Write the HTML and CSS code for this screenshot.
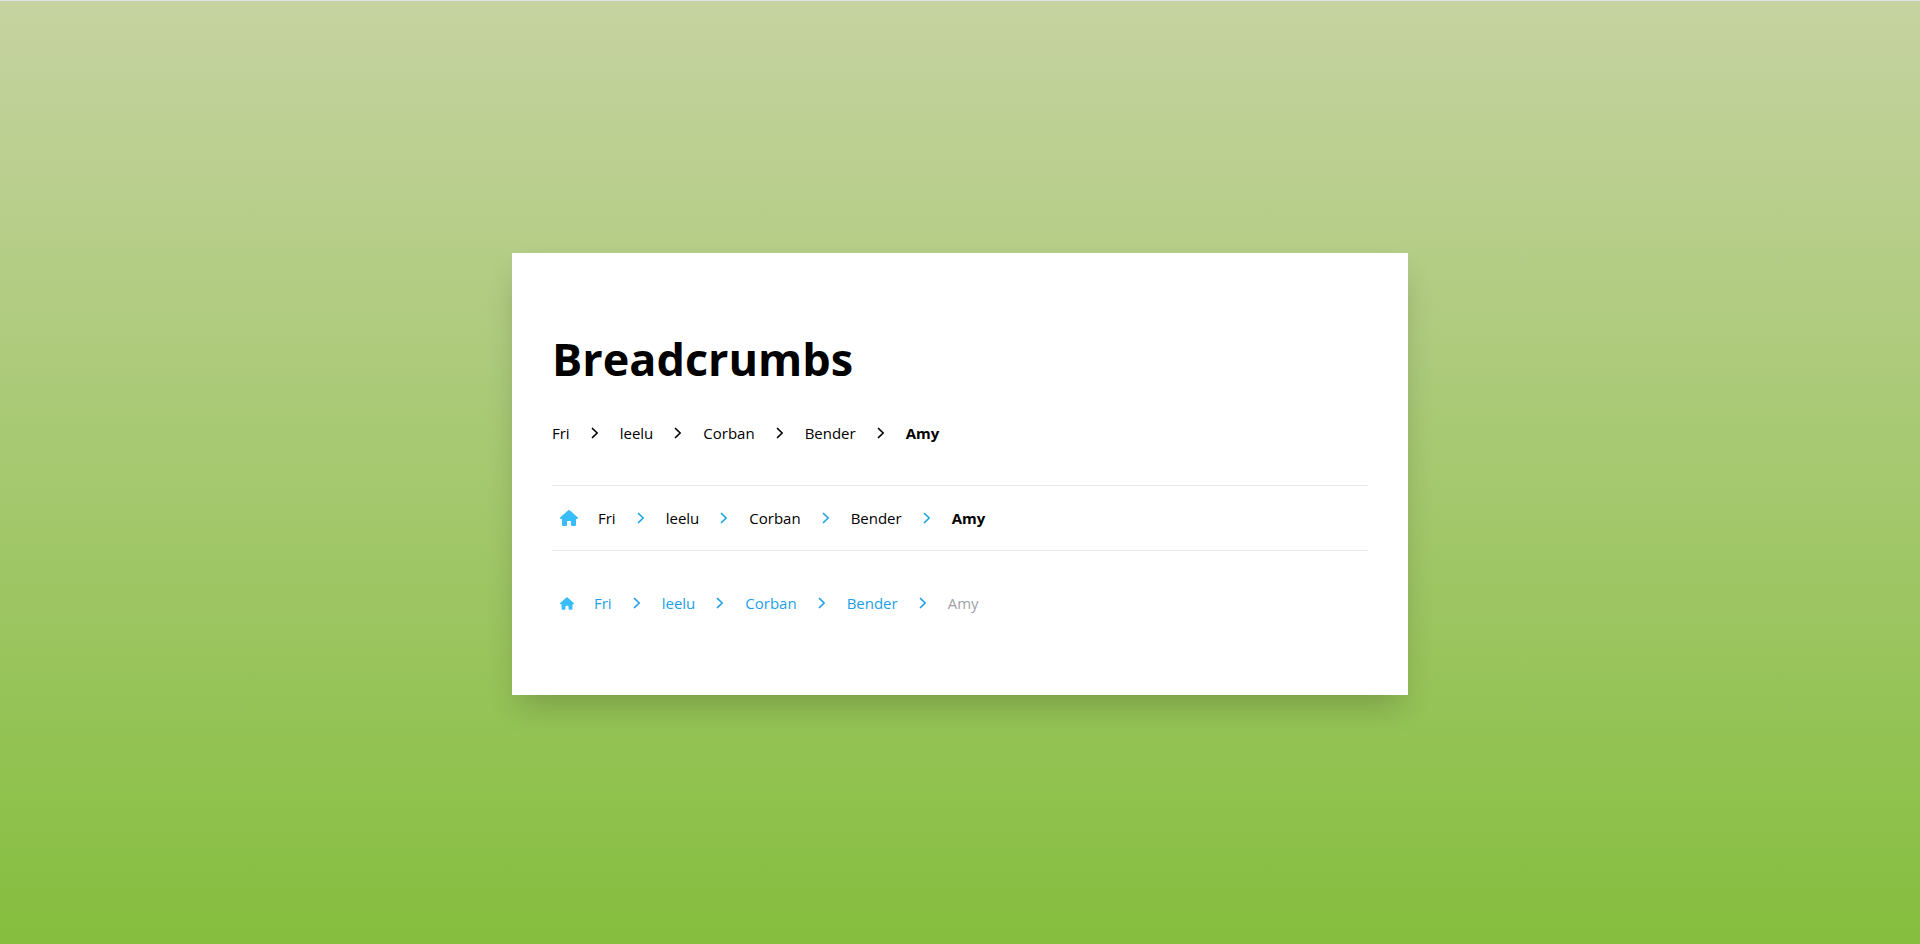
FILE: index.html
```html
<!DOCTYPE html>
<html lang="en">
<head>
<meta charset="utf-8">
<meta name="viewport" content="width=device-width, initial-scale=1">
<title>Breadcrumbs</title>
<link rel="stylesheet" href="styles.css">
</head>
<body>
<svg class="sprite" aria-hidden="true">
  <symbol id="chevron" viewBox="0 0 8 12"><path d="M1.5 1.5 6.2 6 1.5 10.5" fill="none" stroke="currentColor" stroke-width="1.7" stroke-linecap="round" stroke-linejoin="round"/></symbol>
  <symbol id="home" viewBox="0 0 576 512"><path fill="currentColor" d="M575.8 255.5c0 18-15 32.1-32 32.1h-32l.7 160.2c0 2.7-.2 5.4-.5 8.1V472c0 22.1-17.9 40-40 40H456c-1.1 0-2.2 0-3.3-.1c-1.4 .1-2.8 .1-4.2 .1H416 392c-22.1 0-40-17.9-40-40V448 384c0-17.7-14.3-32-32-32H256c-17.7 0-32 14.3-32 32v64 24c0 22.1-17.9 40-40 40H160 128.1c-1.5 0-3-.1-4.5-.2c-1.2 .1-2.4 .2-3.6 .2H104c-22.1 0-40-17.9-40-40V360c0-.9 0-1.9 .1-2.8V287.6H32c-18 0-32-14-32-32.1c0-9 3-17 10-24L266.4 8c7-7 15-8 22-8s15 2 21 7L564.8 231.5c8 7 12 15 11 24z"/></symbol>
</svg>
<main class="card">
  <h1 class="title">Breadcrumbs</h1>

  <nav class="crumbs crumbs-plain" aria-label="Plain breadcrumb">
    <ol class="list">
      <li class="item"><a class="link" href="#">Fri</a><svg class="chevron"><use href="#chevron"/></svg></li>
      <li class="item"><a class="link" href="#">leelu</a><svg class="chevron"><use href="#chevron"/></svg></li>
      <li class="item"><a class="link" href="#">Corban</a><svg class="chevron"><use href="#chevron"/></svg></li>
      <li class="item"><a class="link" href="#">Bender</a><svg class="chevron"><use href="#chevron"/></svg></li>
      <li class="item"><a class="link current" href="#" aria-current="page">Amy</a></li>
    </ol>
  </nav>

  <nav class="crumbs crumbs-ruled" aria-label="Ruled breadcrumb">
    <ol class="list">
      <li class="item"><a class="home" href="#" aria-label="Home"><svg class="home-icon"><use href="#home"/></svg></a></li>
      <li class="item"><a class="link" href="#">Fri</a><svg class="chevron"><use href="#chevron"/></svg></li>
      <li class="item"><a class="link" href="#">leelu</a><svg class="chevron"><use href="#chevron"/></svg></li>
      <li class="item"><a class="link" href="#">Corban</a><svg class="chevron"><use href="#chevron"/></svg></li>
      <li class="item"><a class="link" href="#">Bender</a><svg class="chevron"><use href="#chevron"/></svg></li>
      <li class="item"><a class="link current" href="#" aria-current="page">Amy</a></li>
    </ol>
  </nav>

  <nav class="crumbs crumbs-blue" aria-label="Blue breadcrumb">
    <ol class="list">
      <li class="item"><a class="home" href="#" aria-label="Home"><svg class="home-icon home-icon-small"><use href="#home"/></svg></a></li>
      <li class="item"><a class="link" href="#">Fri</a><svg class="chevron"><use href="#chevron"/></svg></li>
      <li class="item"><a class="link" href="#">leelu</a><svg class="chevron"><use href="#chevron"/></svg></li>
      <li class="item"><a class="link" href="#">Corban</a><svg class="chevron"><use href="#chevron"/></svg></li>
      <li class="item"><a class="link" href="#">Bender</a><svg class="chevron"><use href="#chevron"/></svg></li>
      <li class="item"><a class="link current" href="#" aria-current="page">Amy</a></li>
    </ol>
  </nav>
</main>
</body>
</html>
```
FILE: styles.css
```css
*, *::before, *::after { box-sizing: border-box; }

body {
  margin: 0;
  min-height: 100vh;
  padding-top: 3px;
  display: flex;
  align-items: center;
  justify-content: center;
  border-top: 1px solid #dee1e6;
  background: linear-gradient(#c6d3a1, #85be3e);
  color: #000;
  font: 15px/24px "Segoe UI", "Open Sans", "Noto Sans", sans-serif;
}

.sprite { position: absolute; width: 0; height: 0; }

.card {
  width: 100%;
  max-width: 896px;
  padding: 72px 40px 80px;
  background: #fff;
  box-shadow: 0 16px 30px -6px rgba(0, 0, 0, 0.2);
}

.title {
  margin: 0;
  font-size: 45px;
  line-height: 68px;
  font-weight: 700;
}

.list {
  display: flex;
  flex-wrap: wrap;
  margin: 0;
  padding: 0;
  list-style: none;
}

.item { display: flex; align-items: center; }
.link { color: inherit; text-decoration: none; }
.current { font-weight: 700; }

.chevron {
  width: 8px;
  height: 12px;
  margin: 0 21px;
}

.home { display: flex; margin: 0 20px 0 8px; color: #38bdf8; }
.home-icon { width: 18px; height: 16px; }
.home-icon-small { width: 14px; height: 13px; }

.crumbs-plain { padding: 28px 0 40px; }

.crumbs-ruled {
  padding: 20px 0;
  border-top: 1px solid #e5e7eb;
  border-bottom: 1px solid #e5e7eb;
}
.crumbs-ruled .chevron { color: #1da5e6; }

.crumbs-blue { padding-top: 40px; color: #1d9fe8; }
.crumbs-blue .current { color: #a1a1aa; font-weight: 400; }
```
